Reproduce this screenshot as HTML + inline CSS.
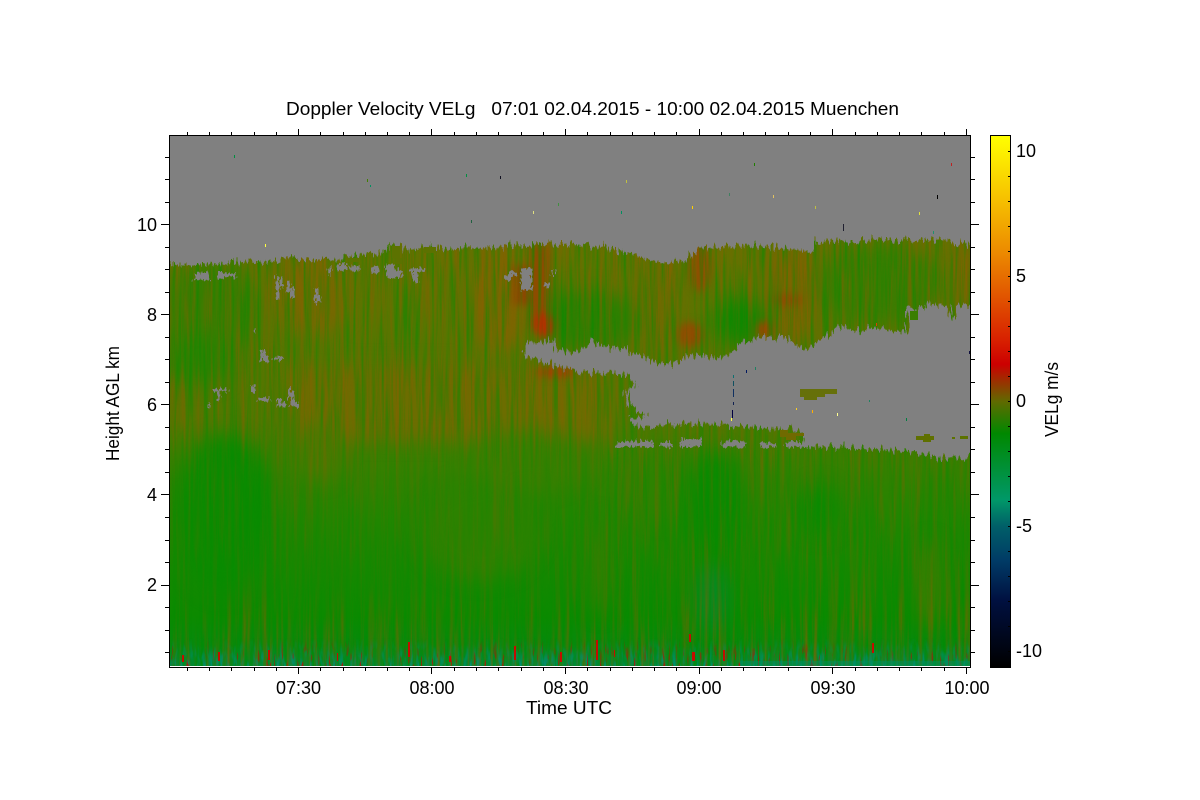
<!DOCTYPE html>
<html><head><meta charset="utf-8"><title>Doppler Velocity</title>
<style>html,body{margin:0;padding:0;background:#fff}svg{display:block}text{font-family:"Liberation Sans",sans-serif;font-size:18px;fill:#000}</style></head>
<body>
<svg xmlns="http://www.w3.org/2000/svg" width="1200" height="800" viewBox="0 0 1200 800">
<defs>
<clipPath id="pc"><rect x="170" y="136" width="800" height="530"/></clipPath>
<linearGradient id="base" gradientUnits="userSpaceOnUse" x1="0" y1="240" x2="0" y2="666">
<stop offset="0" stop-color="#647200"/><stop offset=".2" stop-color="#587600"/><stop offset=".42" stop-color="#507800"/><stop offset=".5" stop-color="#3c7e00"/><stop offset=".66" stop-color="#208600"/><stop offset=".88" stop-color="#0c8a00"/><stop offset=".95" stop-color="#068a0c"/><stop offset="1" stop-color="#008a38"/></linearGradient>
<linearGradient id="cb" gradientUnits="userSpaceOnUse" x1="0" y1="136" x2="0" y2="667">
<stop offset="0" stop-color="#ffff00"/><stop offset=".12" stop-color="#f6c000"/><stop offset=".22" stop-color="#ec8a00"/><stop offset=".31" stop-color="#e05000"/><stop offset=".385" stop-color="#d82000"/><stop offset=".43" stop-color="#cc0000"/><stop offset=".5" stop-color="#606a00"/><stop offset=".56" stop-color="#008800"/><stop offset=".685" stop-color="#009868"/><stop offset=".735" stop-color="#005f68"/><stop offset=".8" stop-color="#003b66"/><stop offset=".875" stop-color="#001040"/><stop offset="1" stop-color="#000"/></linearGradient>
<linearGradient id="fadeS" gradientUnits="userSpaceOnUse" x1="0" y1="240" x2="0" y2="666"><stop offset="0" stop-color="#fff" stop-opacity=".52"/><stop offset=".42" stop-color="#fff" stop-opacity=".45"/><stop offset=".55" stop-color="#fff" stop-opacity=".24"/><stop offset=".82" stop-color="#fff" stop-opacity=".2"/><stop offset=".94" stop-color="#fff" stop-opacity=".55"/><stop offset="1" stop-color="#fff" stop-opacity=".65"/></linearGradient>
<linearGradient id="fadeT" gradientUnits="userSpaceOnUse" x1="0" y1="638" x2="0" y2="666"><stop offset="0" stop-color="#fff" stop-opacity="0"/><stop offset="1" stop-color="#fff" stop-opacity=".8"/></linearGradient>
<mask id="strM"><rect x="170" y="240" width="800" height="426" fill="url(#fadeS)"/><rect x="600" y="450" width="370" height="180" fill="#fff" opacity=".18"/></mask>
<mask id="botM"><rect x="170" y="630" width="800" height="36" fill="url(#fadeT)"/></mask>
<filter id="bl" x="-30%" y="-30%" width="160%" height="160%" color-interpolation-filters="sRGB"><feGaussianBlur stdDeviation="9"/></filter>
<filter id="bs" x="-50%" y="-50%" width="200%" height="200%" color-interpolation-filters="sRGB"><feGaussianBlur stdDeviation="4"/></filter>
<filter id="sb" x="0" y="0" width="100%" height="100%" color-interpolation-filters="sRGB"><feTurbulence type="fractalNoise" baseFrequency="0.22 0.009" numOctaves="3" seed="4"/><feColorMatrix values="0 0 0 0 .56  0 0 0 0 .36  0 0 0 0 0  2.8 0 0 0 -1.15"/></filter>
<filter id="sg" x="0" y="0" width="100%" height="100%" color-interpolation-filters="sRGB"><feTurbulence type="fractalNoise" baseFrequency="0.26 0.011" numOctaves="3" seed="11"/><feColorMatrix values="0 0 0 0 0  0 0 0 0 .55  0 0 0 0 0  0 2.6 0 0 -1.05"/></filter>
<filter id="st" x="0" y="0" width="100%" height="100%" color-interpolation-filters="sRGB"><feTurbulence type="fractalNoise" baseFrequency="0.3 0.06" numOctaves="2" seed="21"/><feColorMatrix values="0 0 0 0 0  0 0 0 0 .56  0 0 0 0 .5  4 0 0 0 -1.9"/></filter>
<filter id="sr" x="0" y="0" width="100%" height="100%" color-interpolation-filters="sRGB"><feTurbulence type="fractalNoise" baseFrequency="0.38 0.05" numOctaves="2" seed="8"/><feColorMatrix values="0 0 0 0 .75  0 0 0 0 .04  0 0 0 0 0  0 12 0 0 -7.6"/></filter>
<filter id="rough" x="-5%" y="-5%" width="110%" height="110%" color-interpolation-filters="sRGB"><feTurbulence type="fractalNoise" baseFrequency="0.42 0.06" numOctaves="2" seed="5" result="n"/><feDisplacementMap in="SourceGraphic" in2="n" scale="18" xChannelSelector="R" yChannelSelector="G"/></filter>
<filter id="rough2" x="-5%" y="-5%" width="110%" height="110%" color-interpolation-filters="sRGB"><feTurbulence type="fractalNoise" baseFrequency="0.45 0.2" numOctaves="2" seed="9" result="n"/><feDisplacementMap in="SourceGraphic" in2="n" scale="9" xChannelSelector="R" yChannelSelector="G"/></filter>
</defs>

<rect width="1200" height="800" fill="#fff"/>
<g clip-path="url(#pc)">
<rect x="170" y="136" width="800" height="530" fill="url(#base)"/>
<g filter="url(#bl)">
<ellipse cx="210" cy="310" rx="50" ry="50" fill="#3e7c00"/>
<ellipse cx="310" cy="290" rx="40" ry="45" fill="#736a00"/>
<rect x="290" y="365" width="320" height="75" fill="#6c6d00"/>
<ellipse cx="500" cy="300" rx="30" ry="55" fill="#786800"/>
<ellipse cx="590" cy="320" rx="50" ry="30" fill="#2c8000"/>
<ellipse cx="660" cy="300" rx="25" ry="55" fill="#6c6c00"/>
<ellipse cx="740" cy="322" rx="28" ry="22" fill="#158700"/>
<ellipse cx="790" cy="295" rx="25" ry="50" fill="#7c6400"/>
<ellipse cx="880" cy="285" rx="65" ry="40" fill="#3a7d00"/>
<rect x="958" y="245" width="20" height="65" fill="#7c6400"/>
<ellipse cx="195" cy="360" rx="40" ry="25" fill="#2a8300"/>
<ellipse cx="225" cy="515" rx="50" ry="80" fill="#0a8b00"/>
<ellipse cx="320" cy="450" rx="22" ry="30" fill="#4e7800"/>
<ellipse cx="480" cy="530" rx="60" ry="50" fill="#2c8200"/>
<ellipse cx="530" cy="460" rx="60" ry="30" fill="#387f00"/>
<ellipse cx="715" cy="510" rx="30" ry="60" fill="#0c8a00"/>
<ellipse cx="712" cy="600" rx="16" ry="35" fill="#048a22"/>
<ellipse cx="930" cy="585" rx="12" ry="45" fill="#3f7c00"/>
<ellipse cx="600" cy="565" rx="10" ry="50" fill="#337f00"/>
<ellipse cx="660" cy="490" rx="25" ry="30" fill="#2e8200"/>
<ellipse cx="820" cy="510" rx="20" ry="25" fill="#0e8a00"/>
</g>
<g filter="url(#bs)">
<rect x="530" y="245" width="20" height="85" fill="#8c4c00"/>
<rect x="512" y="265" width="18" height="40" fill="#8a4800"/>
<ellipse cx="544" cy="325" rx="10" ry="13" fill="#b82c00"/>
<ellipse cx="555" cy="372" rx="20" ry="5" fill="#a83c00"/>
<ellipse cx="700" cy="268" rx="11" ry="24" fill="#8c5000"/>
<ellipse cx="690" cy="335" rx="13" ry="13" fill="#8e4c00"/>
<ellipse cx="765" cy="330" rx="9" ry="9" fill="#944800"/>
<ellipse cx="788" cy="300" rx="16" ry="6" fill="#8e4c00"/>
</g>
<g mask="url(#strM)">
<rect x="170" y="240" width="800" height="426" filter="url(#sb)"/>
<rect x="170" y="240" width="800" height="426" filter="url(#sg)"/>
</g>
<g mask="url(#botM)"><rect x="170" y="630" width="800" height="36" filter="url(#st)"/></g>
<g mask="url(#botM)"><rect x="170" y="630" width="800" height="36" filter="url(#sr)"/></g>
<rect x="740" y="661" width="230" height="5" fill="#008f60" opacity=".5"/>
<g fill="#c40c00" shape-rendering="crispEdges">
<rect x="596" y="640" width="2" height="20"/><rect x="692" y="652" width="3" height="9"/><rect x="723" y="650" width="2" height="11"/><rect x="689" y="634" width="2" height="8"/><rect x="408" y="642" width="2" height="15"/><rect x="268" y="650" width="2" height="10"/><rect x="218" y="652" width="2" height="9"/><rect x="182" y="655" width="2" height="7"/><rect x="514" y="646" width="2" height="14"/><rect x="560" y="652" width="2" height="10"/><rect x="872" y="643" width="2" height="10"/><rect x="449" y="656" width="2" height="6"/><rect x="337" y="653" width="1" height="8"/><rect x="614" y="650" width="1" height="7"/>
</g>

<g filter="url(#rough)" fill="#808080">
<path d="M150,120H990V245L970,246 940,240 900,240 850,240 815,242 813,252 780,248 745,245 720,248 700,247 693,253 677,263 665,262 650,258 630,255 620,250 590,246 560,244 530,244 510,246 490,248 470,247 450,250 430,246 410,250 395,245 380,252 360,256 340,258 320,260 290,260 260,262 230,263 200,265 150,265Z"/>
<path d="M523,353 530,343 553,340 557,350 580,353 587,342 600,342 603,347 627,349 633,353 657,363 677,363 688,355 727,358 743,343 757,337 780,337 797,344 803,350 813,347 830,335 838,325 860,332 873,327 887,330 907,332 908,310 920,310 927,302 947,307 953,320 957,305 990,303V457H970L937,458 920,453 893,450 847,448 800,446 803,432 780,428 747,427 693,423 638,427 628,418 645,418 643,413 630,407 625,390 637,385 627,375 573,370 543,363Z"/>
</g>
<g filter="url(#rough2)" fill="#808080">
<path d="M617,441h36v6h-36zM660,442h12v5h-12zM680,439h22v8h-22zM722,441h24v6h-24zM760,443h16v4h-16zM785,441h15v6h-15z"/>
<path d="M194,273h16v7h-16zM218,273h18v5h-18zM276,276h3v24h-3zM280,278h3v10h-3zM287,282h3v10h-3zM290,288h4v10h-4zM315,288h3v15h-3zM318,296h3v7h-3zM261,350h4v12h-4zM265,357h3v5h-3zM273,357h10v3h-10zM254,328h2v4h-2z"/>
<path d="M212,389h15v3h-15zM217,392h3v8h-3zM251,385h5v7h-5zM258,398h12v3h-12zM277,398h5v9h-5zM282,403h5v4h-5zM288,386h3v12h-3zM291,392h3v14h-3zM294,402h4v6h-4zM208,401h2v6h-2z"/>
<path d="M328,268h4v7h-4zM337,264h10v6h-10zM350,266h10v5h-10zM372,267h7v6h-7zM386,264h8v14h-8zM394,270h8v7h-8zM410,268h14v4h-14zM413,272h5v10h-5z"/>
<path d="M521,268h11v22h-11zM508,272h9v4h-9zM505,276h6v4h-6zM545,281h4v7h-4zM552,270h2v6h-2z"/>
</g>
<g fill="#5c7200" shape-rendering="crispEdges">
<path d="M392,246h8v12h-8zM396,258h6v6h-6zM347,258h12v4h-12zM424,247h12v6h-12z"/>
<path d="M800,389h37v5h-12v3h-8v3h-13v-3h-4z" fill="#66700a"/>
<path d="M916,436h8v-2h6v2h4v4h-3v2h-8v-2h-7z" fill="#5f7000"/>
<path d="M952,437h3v2h-3zM960,436h8v3h-8z"/>
<path d="M910,311h8v9h-8z" fill="#3a7e00"/>
<path d="M780,430h8v3h16v3h-8v4h-10v-3h-6z" fill="#706a00"/>
</g>
<g shape-rendering="crispEdges">
<rect x="234" y="155" width="1" height="3" fill="#009040"/><rect x="367" y="179" width="1" height="3" fill="#408000"/><rect x="370" y="185" width="1" height="2" fill="#009060"/><rect x="265" y="244" width="1" height="3" fill="#ffff40"/><rect x="466" y="174" width="1" height="3" fill="#009040"/><rect x="500" y="176" width="1" height="3" fill="#101020"/><rect x="471" y="220" width="1" height="3" fill="#206040"/><rect x="533" y="211" width="1" height="3" fill="#e0e080"/><rect x="558" y="203" width="1" height="3" fill="#409040"/><rect x="621" y="211" width="1" height="3" fill="#009060"/><rect x="626" y="180" width="1" height="3" fill="#c0c040"/><rect x="692" y="206" width="1" height="3" fill="#ffd000"/><rect x="729" y="193" width="1" height="3" fill="#408060"/><rect x="754" y="163" width="1" height="3" fill="#208000"/><rect x="773" y="195" width="1" height="3" fill="#e0c060"/><rect x="815" y="206" width="1" height="3" fill="#c0c040"/><rect x="843" y="224" width="1" height="7" fill="#202030"/><rect x="937" y="195" width="1" height="4" fill="#000"/><rect x="951" y="163" width="1" height="3" fill="#c02020"/><rect x="919" y="212" width="1" height="3" fill="#e0e040"/><rect x="933" y="231" width="1" height="3" fill="#209070"/>
<rect x="733" y="375" width="1" height="3" fill="#107070"/><rect x="733" y="381" width="1" height="5" fill="#105060"/><rect x="733" y="389" width="1" height="8" fill="#103060"/><rect x="733" y="402" width="1" height="3" fill="#102050"/><rect x="732" y="410" width="1" height="8" fill="#000040"/><rect x="731" y="418" width="1" height="3" fill="#ffff40"/><rect x="746" y="370" width="1" height="3" fill="#001860"/><rect x="755" y="367" width="1" height="3" fill="#208060"/><rect x="796" y="408" width="1" height="2" fill="#ffd020"/><rect x="812" y="410" width="1" height="3" fill="#ffb000"/><rect x="837" y="413" width="1" height="3" fill="#ffff90"/><rect x="969" y="351" width="1" height="3" fill="#101040"/><rect x="876" y="323" width="1" height="3" fill="#e04000"/><rect x="906" y="418" width="1" height="3" fill="#008040"/><rect x="869" y="400" width="1" height="2" fill="#208060"/>
</g>
</g>

<rect x="169.5" y="135.5" width="801" height="532" fill="none" stroke="#000" shape-rendering="crispEdges"/>
<path shape-rendering="crispEdges" stroke="#000" fill="none" d="
M187.5,135v-3M209.5,135v-3M231.5,135v-3M254.5,135v-3M276.5,135v-3M298.5,135v-6M320.5,135v-3M343.5,135v-3M365.5,135v-3M387.5,135v-3M409.5,135v-3M431.5,135v-6M454.5,135v-3M476.5,135v-3M498.5,135v-3M521.5,135v-3M543.5,135v-3M565.5,135v-6M587.5,135v-3M610.5,135v-3M632.5,135v-3M654.5,135v-3M676.5,135v-3M699.5,135v-6M721.5,135v-3M743.5,135v-3M765.5,135v-3M788.5,135v-3M810.5,135v-3M832.5,135v-6M855.5,135v-3M877.5,135v-3M899.5,135v-3M921.5,135v-3M944.5,135v-3M966.5,135v-6
M187.5,668v3M209.5,668v3M231.5,668v3M254.5,668v3M276.5,668v3M298.5,668v6M320.5,668v3M343.5,668v3M365.5,668v3M387.5,668v3M409.5,668v3M431.5,668v6M454.5,668v3M476.5,668v3M498.5,668v3M521.5,668v3M543.5,668v3M565.5,668v6M587.5,668v3M610.5,668v3M632.5,668v3M654.5,668v3M676.5,668v3M699.5,668v6M721.5,668v3M743.5,668v3M765.5,668v3M788.5,668v3M810.5,668v3M832.5,668v6M855.5,668v3M877.5,668v3M899.5,668v3M921.5,668v3M944.5,668v3M966.5,668v6
M169,157.5h-4M169,179.5h-4M169,202.5h-4M169,224.5h-8M169,247.5h-4M169,269.5h-4M169,292.5h-4M169,314.5h-8M169,337.5h-4M169,359.5h-4M169,382.5h-4M169,404.5h-8M169,427.5h-4M169,449.5h-4M169,472.5h-4M169,494.5h-8M169,517.5h-4M169,540.5h-4M169,562.5h-4M169,585.5h-8M169,607.5h-4M169,630.5h-4M169,652.5h-4
M971,157.5h4M971,179.5h4M971,202.5h4M971,224.5h8M971,247.5h4M971,269.5h4M971,292.5h4M971,314.5h8M971,337.5h4M971,359.5h4M971,382.5h4M971,404.5h8M971,427.5h4M971,449.5h4M971,472.5h4M971,494.5h8M971,517.5h4M971,540.5h4M971,562.5h4M971,585.5h8M971,607.5h4M971,630.5h4M971,652.5h4"/>

<rect x="990.5" y="135.5" width="20" height="532" fill="url(#cb)" stroke="#000" shape-rendering="crispEdges"/>
<path shape-rendering="crispEdges" stroke="#000" fill="none" d="M1010,151.5h-2M1010,176.5h-2M1010,201.5h-2M1010,226.5h-2M1010,251.5h-2M1010,276.5h-2M1010,301.5h-2M1010,326.5h-2M1010,351.5h-2M1010,376.5h-2M1010,401.5h-2M1010,426.5h-2M1010,451.5h-2M1010,476.5h-2M1010,501.5h-2M1010,526.5h-2M1010,551.5h-2M1010,576.5h-2M1010,601.5h-2M1010,626.5h-2M1010,651.5h-2"/>

<text x="286" y="115" textLength="613" lengthAdjust="spacingAndGlyphs" xml:space="preserve">Doppler Velocity VELg   07:01 02.04.2015 - 10:00 02.04.2015 Muenchen</text>
<g text-anchor="end">
<text x="157" y="231">10</text><text x="157" y="321">8</text><text x="157" y="411">6</text><text x="157" y="501">4</text><text x="157" y="591">2</text>
</g>
<g text-anchor="middle">
<text x="298.5" y="694">07:30</text><text x="432" y="694">08:00</text><text x="566" y="694">08:30</text><text x="699" y="694">09:00</text><text x="833" y="694">09:30</text><text x="967" y="694">10:00</text>
</g>
<text x="526" y="714" textLength="86" lengthAdjust="spacingAndGlyphs">Time UTC</text>
<text x="1016" y="157">10</text><text x="1016" y="282">5</text><text x="1016" y="407">0</text><text x="1016" y="532">-5</text><text x="1016" y="657">-10</text>
<text transform="translate(119,461) rotate(-90)" textLength="115" lengthAdjust="spacingAndGlyphs">Height AGL km</text>
<text transform="translate(1058,437) rotate(-90)" textLength="75" lengthAdjust="spacingAndGlyphs">VELg m/s</text>
</svg>
</body></html>
